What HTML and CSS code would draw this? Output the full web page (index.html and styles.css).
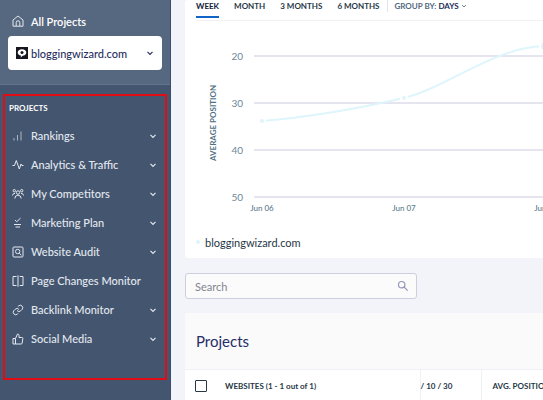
FILE: index.html
```html
<!DOCTYPE html>
<html lang="en">
<head>
    <meta charset="UTF-8">
    <meta name="viewport" content="width=device-width, initial-scale=1.0">
    <title>Projects</title>
    <link rel="stylesheet" href="styles.css">
</head>
<body>
    <svg class="sprite" aria-hidden="true">
        <symbol id="chevron" viewBox="0 0 8 8"><path d="M1.5 2.8 4 5.3l2.5-2.5"/></symbol>
    </svg>

    <aside class="sidebar">
        <div class="sidebar-top">
            <a class="all-projects" href="#">
                <svg class="icon" viewBox="0 0 12 12"><path d="M1 5 6 1l5 4v6.2H1zM4.2 11V7.500q0-1.700 1.800-1.700t1.800 1.700V11"/></svg>
                All Projects
            </a>
            <div class="site-picker">
                <svg class="favicon" viewBox="0 0 12 12">
                    <rect width="12" height="12" fill="#16161c"/>
                    <path d="M6 2.200c2.600 0 4.300 1.300 4.300 3.300S8.700 8.700 6.600 8.800L4.800 10.400l.1-1.800C2.900 8.200 1.700 7.100 1.700 5.500 1.700 3.500 3.400 2.200 6 2.200z" fill="#fff"/>
                    <circle cx="6" cy="5.500" r="1.500" fill="#16161c"/>
                </svg>
                <select aria-label="Project">
                    <option>bloggingwizard.com</option>
                </select>
                <svg class="chevron"><use href="#chevron"/></svg>
            </div>
        </div>

        <nav class="menu">
            <h2>PROJECTS</h2>
            <button type="button">
                <svg class="icon dim" viewBox="0 0 12 12"><path d="M2 8V10.500M5.500 5V10.500M9 1.500v9"/></svg>
                Rankings
                <svg class="chevron"><use href="#chevron"/></svg>
            </button>
            <button type="button">
                <svg class="icon" viewBox="0 0 12 12"><path d="M.5 6.500h2L4.300 1.500l3 8.500 1.700-5 .8 1.500h1.700"/></svg>
                Analytics &amp; Traffic
                <svg class="chevron"><use href="#chevron"/></svg>
            </button>
            <button type="button">
                <svg class="icon" viewBox="0 0 12 12"><circle cx="6" cy="4.500" r="1.700"/><circle cx="2.300" cy="2.700" r="1.200"/><circle cx="9.700" cy="2.700" r="1.200"/><path d="M2.800 10.500q.2-3.300 3.200-3.300t3.200 3.300M.5 7.500Q.7 5.300 3 5.300M11.500 7.500Q11.300 5.300 9 5.300"/></svg>
                My Competitors
                <svg class="chevron"><use href="#chevron"/></svg>
            </button>
            <button type="button">
                <svg class="icon" viewBox="0 0 12 12"><path d="M3 3l1.700 1.700L8.500 1.200M2 7.500h7M3.500 10h4.500"/></svg>
                Marketing Plan
                <svg class="chevron"><use href="#chevron"/></svg>
            </button>
            <button type="button">
                <svg class="icon" viewBox="0 0 12 12"><rect x="1" y="1" width="10" height="10" rx="1"/><circle cx="5.700" cy="5.500" r="2.200"/><path d="M7.300 7.200 9.300 9.300"/></svg>
                Website Audit
                <svg class="chevron"><use href="#chevron"/></svg>
            </button>
            <a href="#">
                <svg class="icon" viewBox="0 0 12 12"><path d="M4.500 1.500H1v9h3.500M6 .3v11.400M7.700 1.500H11v9H7.700"/></svg>
                Page Changes Monitor
            </a>
            <button type="button">
                <svg class="icon" viewBox="0 0 24 24"><path class="wide" d="M10 13a5 5 0 0 0 7.500.5l3-3a5 5 0 0 0-7-7l-1.800 1.700M14 11a5 5 0 0 0-7.500-.5l-3 3a5 5 0 0 0 7 7l1.700-1.700"/></svg>
                Backlink Monitor
                <svg class="chevron"><use href="#chevron"/></svg>
            </button>
            <button type="button">
                <svg class="icon" viewBox="0 0 24 24"><path class="wide" d="M14 9V5a3 3 0 0 0-3-3L7 11v11h11.300a2 2 0 0 0 2-1.700l1.400-9a2 2 0 0 0-2-2.300zM7 22H2V11h5"/></svg>
                Social Media
                <svg class="chevron"><use href="#chevron"/></svg>
            </button>
        </nav>
    </aside>

    <main class="content">
        <section class="card chart-card">
            <div class="tabs">
                <button type="button" class="tab active">WEEK</button>
                <button type="button" class="tab">MONTH</button>
                <button type="button" class="tab">3 MONTHS</button>
                <button type="button" class="tab">6 MONTHS</button>
                <div class="group-by">
                    <label for="group">GROUP BY:</label>
                    <select id="group"><option>DAYS</option></select>
                    <svg class="chevron"><use href="#chevron"/></svg>
                </div>
            </div>

            <!-- average position by day -->
            <svg class="chart" role="img" aria-label="Average position">
                <text class="axis-title" transform="translate(20 102) rotate(-90)" text-anchor="middle">AVERAGE POSITION</text>
                <g class="grid">
                    <line x1="58" y1="35" x2="100%" y2="35"/>
                    <line x1="58" y1="82" x2="100%" y2="82"/>
                    <line x1="58" y1="129" x2="100%" y2="129"/>
                    <line x1="58" y1="176" x2="100%" y2="176"/>
                </g>
                <g class="ticks" text-anchor="end">
                    <text x="47" y="39">20</text>
                    <text x="47" y="86">30</text>
                    <text x="47" y="133">40</text>
                    <text x="47" y="180">50</text>
                </g>
                <g class="days" text-anchor="middle">
                    <text x="66" y="190">Jun 06</text>
                    <text x="208" y="190">Jun 07</text>
                    <text x="350" y="190">Jun 08</text>
                </g>
                <path class="series" d="M66 100C115 96 160 88 208 77C250 67 300 25 350 25"/>
                <g class="points">
                    <circle cx="66" cy="100" r="3"/>
                    <circle cx="208" cy="77" r="3"/>
                    <circle cx="350" cy="25" r="6"/>
                </g>
            </svg>

            <div class="legend"><span class="dot"></span>bloggingwizard.com</div>
        </section>

        <div class="search">
            <input type="search" placeholder="Search" aria-label="Search">
            <svg viewBox="0 0 12 12"><circle cx="4.700" cy="4.700" r="3.200"/><path d="M7.200 7.200 10.700 10.700"/></svg>
        </div>

        <section class="card">
            <h1>Projects</h1>
            <table>
                <tr>
                    <th class="col-sites">
                        <div class="cell">
                            <input type="checkbox" aria-label="Select all websites">
                            WEBSITES (1 - 1 out of 1)
                        </div>
                    </th>
                    <th class="col-top">/ 10 / 30</th>
                    <th class="col-avg">AVG. POSITION</th>
                </tr>
            </table>
        </section>
    </main>
</body>
</html>
```
FILE: styles.css
```css
* { margin: 0; padding: 0; box-sizing: border-box; }
body {
    display: flex;
    min-height: 100vh;
    font-family: Lato, "Open Sans", sans-serif;
    font-size: 11px;
    color: #263746;
    background: #f3f4f9;
    overflow: hidden;
}
button, select, input { font: inherit; color: inherit; background: none; border: none; }
select { appearance: none; }
a { color: inherit; text-decoration: none; }
svg { flex: none; fill: none; stroke: none; }
.sprite { display: none; }
.icon {
    width: 12px;
    height: 12px;
    margin-right: 7px;
    stroke: #e3e8ef;
    stroke-width: 1;
    stroke-linejoin: round;
}
.icon .wide { stroke-width: 2; }
.icon.dim { stroke: #aab5c4; }
.chevron {
    width: 8px;
    height: 8px;
    stroke: currentColor;
    stroke-width: 1.2;
}

/* sidebar */
.sidebar {
    flex: none;
    width: 171px;
    background: #44566f;
    border-right: 1px solid #365070;
    color: #e3e8ef;
    font-weight: 500;
}
.sidebar-top {
    height: 85px;
    padding: 12px 8px 0 8px;
    background: #566780;
    border-bottom: 1px solid #63758d;
}
.all-projects {
    display: flex;
    align-items: center;
    height: 18px;
    padding-left: 4px;
    color: #fff;
    font-weight: 600;
}
.site-picker {
    display: flex;
    align-items: center;
    height: 34px;
    margin-top: 6px;
    padding: 0 8px;
    background: #fff;
    border-radius: 4px;
    color: #29305f;
}
.site-picker select { flex: 1; }
.favicon { width: 12px; height: 12px; margin-right: 3px; }

.menu {
    height: 286px;
    margin: 9px 3px 0 3px;
    border: 2px solid #e10c14;
}
.menu h2 {
    height: 25px;
    padding: 5px 0 0 4px;
    font-size: 8px;
    line-height: 14px;
    color: #fff;
}
.menu button, .menu a {
    display: flex;
    align-items: center;
    width: 100%;
    height: 29px;
    padding: 0 8px 0 7px;
    text-align: left;
}
.menu .chevron { margin-left: auto; }

/* main column */
.content { flex: 1; min-width: 0; padding-left: 14px; }
.card { background: #fff; border-radius: 3px 0 0 3px; overflow: hidden; }
.chart-card { padding-left: 11px; }
.tabs {
    display: flex;
    gap: 15px;
    height: 21px;
    border-bottom: 1px solid #eff1f5;
    font-size: 8px;
    font-weight: 700;
    white-space: nowrap;
}
.tab { height: 18px; padding-bottom: 6px; line-height: 12px; }
.tab.active { color: #12213a; border-bottom: 2px solid #1264c8; padding-bottom: 4px; }
.group-by {
    display: flex;
    align-items: center;
    gap: 2px;
    height: 12px;
    margin-left: -8px;
    padding-left: 7px;
    border-left: 1px solid #e1e4ec;
    color: #52677f;
}
.group-by select { color: #1c2d5c; }
.group-by .chevron { width: 6px; height: 6px; }
.chart { display: block; width: 100%; height: 210px; }
.axis-title { font-size: 8px; font-weight: 700; fill: #507083; }
.grid { stroke: #e5e5ef; stroke-width: 2; }
.ticks { font-size: 10px; fill: #6d8798; }
.days { font-size: 8px; font-weight: 500; fill: #5c7a8b; }
.series { stroke: #def5fc; stroke-width: 2; }
.points { fill: #def5fc; stroke: #fff; stroke-width: 2; }
.legend { display: flex; align-items: center; height: 27px; padding-bottom: 5px; }
.dot {
    width: 4px;
    height: 4px;
    margin-right: 5px;
    border-radius: 50%;
    background: #def5fc;
}

.search {
    display: flex;
    align-items: center;
    width: 232px;
    height: 26px;
    margin: 15px 0 14px;
    padding: 0 7px 0 9px;
    background: #fbfbfb;
    border: 1px solid #cdcfdf;
    border-radius: 3px;
}
.search input { flex: 1; min-width: 0; outline: none; }
.search input::placeholder { color: #7e858d; }
.search svg { width: 12px; height: 12px; stroke: #9298b8; stroke-width: 1.2; }

h1 {
    height: 57px;
    padding-left: 11px;
    background: #fafafa;
    border-bottom: 1px solid #eff1f6;
    font-size: 15px;
    font-weight: 400;
    line-height: 57px;
    color: #262d68;
}
table { width: 420px; border-collapse: collapse; table-layout: fixed; }
th {
    height: 32px;
    font-size: 8px;
    font-weight: 700;
    text-align: left;
    white-space: nowrap;
}
th + th { border-left: 1px solid #eff1f6; }
.col-sites { width: 235px; }
.col-top { width: 61px; }
.col-avg { padding-left: 11px; }
.cell { display: flex; align-items: center; gap: 18px; padding-left: 10px; }
.cell input {
    appearance: none;
    width: 12px;
    height: 12px;
    border: 1px solid #263746;
    border-radius: 1px;
}
```
